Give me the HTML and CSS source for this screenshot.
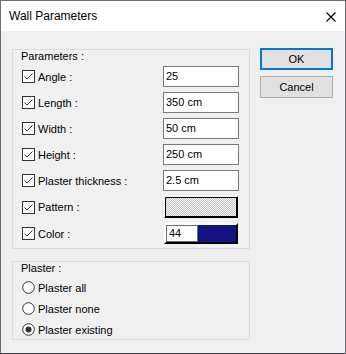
FILE: index.html
```html
<!DOCTYPE html>
<html lang="en">
<head>
  <meta charset="UTF-8">
  <title>Wall Parameters</title>
  <link rel="stylesheet" href="styles.css">
</head>
<body>

<div class="window">
  <div class="titlebar">
    <span class="title">Wall Parameters</span>
    <svg class="close" width="10" height="10" viewBox="0 0 10 10">
      <path d="M0.5 0.5 L9.5 9.5 M9.5 0.5 L0.5 9.5" stroke="#000" stroke-width="1.1" fill="none"/>
    </svg>
  </div>

  <div class="client">
    <div class="left">
      <div class="group params">
        <div class="group-title">Parameters :</div>
        <div class="rows">
          <div class="row">
            <label class="check"><svg class="box" width="13" height="13" viewBox="0 0 13 13"><rect x="0.5" y="0.5" width="12" height="12" fill="#fff" stroke="#333"/><path d="M2.5 6.5 L5 9 L10.5 3.5" stroke="#333" stroke-width="1" fill="none"/></svg>Angle :</label>
            <div class="field">25</div>
          </div>
          <div class="row">
            <label class="check"><svg class="box" width="13" height="13" viewBox="0 0 13 13"><rect x="0.5" y="0.5" width="12" height="12" fill="#fff" stroke="#333"/><path d="M2.5 6.5 L5 9 L10.5 3.5" stroke="#333" stroke-width="1" fill="none"/></svg>Length :</label>
            <div class="field">350 cm</div>
          </div>
          <div class="row">
            <label class="check"><svg class="box" width="13" height="13" viewBox="0 0 13 13"><rect x="0.5" y="0.5" width="12" height="12" fill="#fff" stroke="#333"/><path d="M2.5 6.5 L5 9 L10.5 3.5" stroke="#333" stroke-width="1" fill="none"/></svg>Width :</label>
            <div class="field">50 cm</div>
          </div>
          <div class="row">
            <label class="check"><svg class="box" width="13" height="13" viewBox="0 0 13 13"><rect x="0.5" y="0.5" width="12" height="12" fill="#fff" stroke="#333"/><path d="M2.5 6.5 L5 9 L10.5 3.5" stroke="#333" stroke-width="1" fill="none"/></svg>Height :</label>
            <div class="field">250 cm</div>
          </div>
          <div class="row">
            <label class="check"><svg class="box" width="13" height="13" viewBox="0 0 13 13"><rect x="0.5" y="0.5" width="12" height="12" fill="#fff" stroke="#333"/><path d="M2.5 6.5 L5 9 L10.5 3.5" stroke="#333" stroke-width="1" fill="none"/></svg>Plaster thickness :</label>
            <div class="field">2.5 cm</div>
          </div>
          <div class="row tall">
            <label class="check"><svg class="box" width="13" height="13" viewBox="0 0 13 13"><rect x="0.5" y="0.5" width="12" height="12" fill="#fff" stroke="#333"/><path d="M2.5 6.5 L5 9 L10.5 3.5" stroke="#333" stroke-width="1" fill="none"/></svg>Pattern :</label>
            <div class="swatch"><div class="swatch-in pattern"></div></div>
          </div>
          <div class="row">
            <label class="check"><svg class="box" width="13" height="13" viewBox="0 0 13 13"><rect x="0.5" y="0.5" width="12" height="12" fill="#fff" stroke="#333"/><path d="M2.5 6.5 L5 9 L10.5 3.5" stroke="#333" stroke-width="1" fill="none"/></svg>Color :</label>
            <div class="swatch color">
              <div class="swatch-in colorbox">
                <span class="num">44</span>
                <span class="fill"></span>
              </div>
            </div>
          </div>
        </div>
      </div>

      <div class="group plaster">
        <div class="group-title">Plaster :</div>
        <div class="radios">
          <label class="radio"><svg width="13" height="13" viewBox="0 0 13 13"><circle cx="6.5" cy="6.5" r="5.8" fill="#fff" stroke="#333"/></svg>Plaster all</label>
          <label class="radio"><svg width="13" height="13" viewBox="0 0 13 13"><circle cx="6.5" cy="6.5" r="5.8" fill="#fff" stroke="#333"/></svg>Plaster none</label>
          <label class="radio"><svg width="13" height="13" viewBox="0 0 13 13"><circle cx="6.5" cy="6.5" r="5.8" fill="#fff" stroke="#333"/><circle cx="6.5" cy="6.5" r="3" fill="#333"/></svg>Plaster existing</label>
        </div>
      </div>
    </div>

    <div class="buttons">
      <div class="btn default">OK</div>
      <div class="btn">Cancel</div>
    </div>
  </div>
</div>

</body>
</html>
```

FILE: styles.css
```css
body {
  margin: 0;
  background: #fff;
  font-family: "Liberation Sans", Arial, sans-serif;
  font-size: 11px;
  color: #000;
}
.window {
  width: 346px;
  height: 354px;
  box-sizing: border-box;
  border: 1px solid #6b6f76;
  border-bottom-color: #3c4452;
  display: flex;
  flex-direction: column;
}
.titlebar {
  height: 30px;
  background: #fff;
  display: flex;
  align-items: center;
  justify-content: space-between;
  padding: 0 9px 0 8px;
}
.title {
  font-family: "Liberation Sans", Arial, sans-serif;
  font-size: 12px;
  margin-top: -1px;
}
.close {
  display: block;
  margin-top: 1px;
}
.client {
  flex: 1;
  background: #f0f0f0;
  display: flex;
  gap: 10px;
  padding: 17px 0 0 11px;
}
.left {
  width: 238px;
}
.group {
  border: 1px solid #dcdcdc;
  box-sizing: border-box;
}
.group-title {
  display: inline-block;
  margin: -7px 0 0 -3px;
  padding: 0 2px;
  line-height: 13px;
  background: #f0f0f0;
}
.params {
  margin-top: 1px;
  height: 200px;
  padding: 0 10px 0 9px;
}
.rows {
  margin-top: 3px;
  display: flex;
  flex-direction: column;
  gap: 5px;
}
.row {
  height: 21px;
  display: flex;
  align-items: center;
  justify-content: space-between;
}
.row.tall {
  height: 22px;
}
.check, .radio {
  display: flex;
  align-items: center;
  gap: 3px;
}
.check svg, .radio svg {
  display: block;
}
.field {
  width: 76px;
  height: 21px;
  box-sizing: border-box;
  border: 1px solid #7a7a7a;
  background: #fff;
  padding-left: 2px;
  line-height: 19px;
}
.swatch {
  width: 74px;
  height: 22px;
  box-sizing: border-box;
  margin-right: 1px;
  border: 1px solid;
  border-color: #fff #000 #000 #fff;
}
.swatch.color {
  height: 21px;
}
.swatch-in {
  height: 100%;
  box-sizing: border-box;
  border: 1px solid #000;
}
.pattern {
  background: repeating-conic-gradient(#c4c6cc 0 25%, #f4f4f4 0 50%) 0 0 / 2px 2px;
}
.colorbox {
  display: flex;
  border-left-color: #fff;
  border-top-color: #fff;
}
.num {
  width: 32px;
  box-sizing: border-box;
  border: 1px solid #6d6d6d;
  background: #fff;
  padding-left: 2px;
  line-height: 15px;
}
.fill {
  flex: 1;
  background: #121282;
}
.plaster {
  margin-top: 12px;
  height: 79px;
  padding: 0 9px;
}
.radios {
  margin-top: 2px;
}
.radio {
  height: 21px;
}
.buttons {
  width: 73px;
  display: flex;
  flex-direction: column;
  gap: 6px;
}
.btn {
  height: 22px;
  box-sizing: border-box;
  border: 1px solid #adadad;
  background: #e1e1e1;
  text-align: center;
  line-height: 20px;
}
.btn.default {
  border: 2px solid #0078d7;
  line-height: 18px;
}
```
